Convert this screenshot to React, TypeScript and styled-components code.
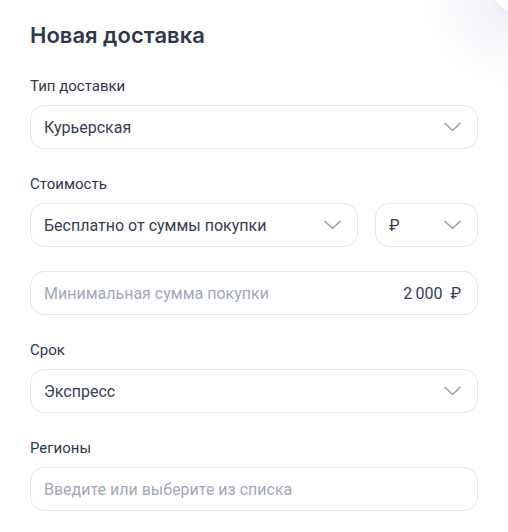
import React from "react";
import styled, { createGlobalStyle } from "styled-components";

const Global = createGlobalStyle`
  html, body { margin: 0; padding: 0; background: #fff; }
  body { font-family: "Roboto", "Noto Sans", sans-serif; -webkit-font-smoothing: antialiased; }
  * { box-sizing: border-box; }
`;

const Page = styled.div`
  position: relative;
  width: 508px;
  height: 532px;
  overflow: hidden;
  background: #fff;
`;

const Glow = styled.div`
  position: absolute;
  top: -100px;
  right: -100px;
  width: 190px;
  height: 190px;
  border-radius: 50%;
  background: radial-gradient(circle, rgba(222,225,238,0.5) 0%, rgba(235,237,245,0.3) 45%, rgba(255,255,255,0) 70%);
`;

const CloseBtn = styled.div`
  position: absolute;
  top: -36px;
  right: -32px;
  width: 48px;
  height: 48px;
  border-radius: 50%;
  background: #fff;
  box-shadow: 0 0 0 1px #eef0f6, 0 2px 8px rgba(80, 90, 130, 0.06);
`;

const Form = styled.div`
  display: flex;
  flex-direction: column;
  padding: 21px 30px 0 30px;
`;

const Title = styled.h1`
  margin: 0 0 27px 0;
  font-family: "Inter", "Roboto", sans-serif;
  font-size: 22px;
  line-height: 28px;
  font-weight: 600;
  color: #2f374a;
`;

const Group = styled.div<{ $gap?: number }>`
  display: flex;
  flex-direction: column;
  margin-bottom: ${(p) => p.$gap ?? 25}px;
`;

const Label = styled.div`
  font-size: 15px;
  line-height: 20px;
  color: #313848;
  margin-bottom: 9px;
`;

const Row = styled.div`
  display: flex;
  gap: 17px;
`;

const Box = styled.div<{ $width?: number }>`
  display: flex;
  align-items: center;
  height: 44px;
  flex: ${(p) => (p.$width ? "none" : "1 0 auto")};
  width: ${(p) => (p.$width ? `${p.$width}px` : "auto")};
  padding: 0 16px 0 13px;
  border: 1px solid #e3e5ef;
  border-radius: 14px;
  background: #fff;
`;

const Value = styled.span`
  flex: 1;
  font-size: 16px;
  color: #363e51;
  white-space: nowrap;
`;

const Placeholder = styled.span`
  flex: 1;
  font-size: 16px;
  color: #a3a8b8;
  white-space: nowrap;
`;

const Amount = styled.span`
  font-size: 16px;
  color: #363e51;
  white-space: nowrap;
`;

const Chevron = () => (
  <svg width="17" height="10" viewBox="0 0 17 10" fill="none">
    <path d="M1 1.2l7.5 7.3L16 1.2" stroke="#9aa0b2" strokeWidth="1.6" strokeLinecap="round" strokeLinejoin="round" />
  </svg>
);

export default function App() {
  return (
    <Page>
      <Global />
      <Glow />
      <CloseBtn />
      <Form>
        <Title>Новая доставка</Title>
        <Group>
          <Label>Тип доставки</Label>
          <Box>
            <Value>Курьерская</Value>
            <Chevron />
          </Box>
        </Group>
        <Group $gap={24}>
          <Label>Стоимость</Label>
          <Row>
            <Box>
              <Value>Бесплатно от суммы покупки</Value>
              <Chevron />
            </Box>
            <Box $width={103}>
              <Value>₽</Value>
              <Chevron />
            </Box>
          </Row>
        </Group>
        <Group>
          <Box>
            <Placeholder>Минимальная сумма покупки</Placeholder>
            <Amount>2&#8201;000&nbsp; ₽</Amount>
          </Box>
        </Group>
        <Group>
          <Label>Срок</Label>
          <Box>
            <Value>Экспресс</Value>
            <Chevron />
          </Box>
        </Group>
        <Group>
          <Label>Регионы</Label>
          <Box>
            <Placeholder>Введите или выберите из списка</Placeholder>
          </Box>
        </Group>
      </Form>
    </Page>
  );
}
